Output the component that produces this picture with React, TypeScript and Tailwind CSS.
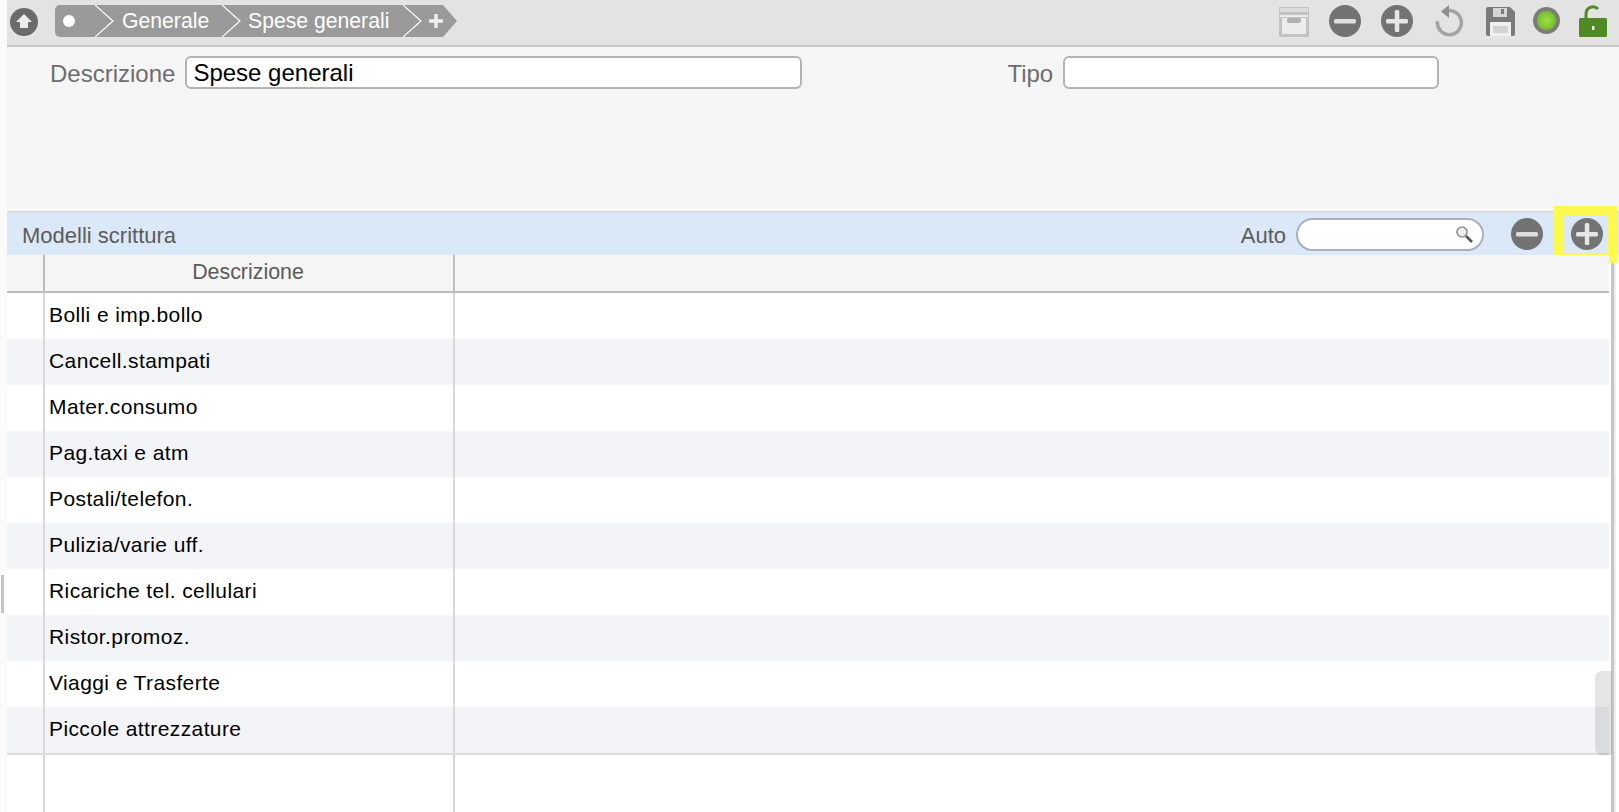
const rows = [
  "Bolli e imp.bollo",
  "Cancell.stampati",
  "Mater.consumo",
  "Pag.taxi e atm",
  "Postali/telefon.",
  "Pulizia/varie uff.",
  "Ricariche tel. cellulari",
  "Ristor.promoz.",
  "Viaggi e Trasferte",
  "Piccole attrezzature",
];

const RoundMinus = () => (
  <svg width="32" height="32" viewBox="0 0 32 32" className="block">
    <circle cx="16" cy="16" r="16" fill="#737373" />
    <rect x="5" y="14" width="22" height="4.5" rx="1.5" fill="#dedede" />
  </svg>
);

const RoundPlus = () => (
  <svg width="32" height="32" viewBox="0 0 32 32" className="block">
    <circle cx="16" cy="16" r="16" fill="#737373" />
    <rect x="5" y="14" width="22" height="4.5" rx="1.5" fill="#e6e6e6" />
    <rect x="13.8" y="5" width="4.5" height="22" rx="1.5" fill="#e6e6e6" />
  </svg>
);

const Chevron = () => (
  <svg width="20" height="32" viewBox="0 0 20 32" className="block shrink-0 bg-[#9a9a9a]">
    <path d="M0 0 L18 16 L0 32" fill="none" stroke="#ffffff" strokeWidth="1.2" />
  </svg>
);

const Field = ({ label, value, labelClass, inputClass }: { label: string; value?: string; labelClass: string; inputClass: string }) => (
  <div className="flex items-center">
    <span className={`mt-1 text-[24px] text-[#6d6d6d] ${labelClass}`}>{label}</span>
    <div className={`h-[33px] rounded-[6px] border-2 border-[#b4b4b4] bg-white pl-[6px] text-[24px] leading-[29px] text-black ${inputClass}`}>
      {value}
    </div>
  </div>
);

export default function App() {
  return (
    <div className="flex h-[812px] w-[1619px] overflow-hidden bg-white font-['Liberation_Sans',sans-serif]">
      {/* left gutter */}
      <div className="flex w-[7px] shrink-0 flex-col bg-[#fbfbfb] pt-[575px]">
        <div className="ml-px h-[38px] w-[3px] bg-[#c4c4c4]" />
      </div>

      <div className="flex min-w-0 flex-1 flex-col">
        {/* toolbar */}
        <div className="flex h-[47px] shrink-0 items-start border-b-2 border-[#c9c9c9] bg-[#e3e3e3]">
          <svg width="28" height="28" viewBox="0 0 28 28" className="ml-[3px] mt-2 shrink-0">
            <circle cx="14" cy="14" r="14" fill="#6b6b6b" />
            <path d="M14 6 L22 14 L18 14 L18 20 L10 20 L10 14 L6 14 Z" fill="#ececec" />
          </svg>

          <div className="ml-[17px] mt-[5px] flex h-8 items-stretch text-[21.2px] text-white">
            <div className="flex w-10 items-center rounded-l-[5px] bg-[#9a9a9a] pl-2">
              <div className="h-3 w-3 rounded-full bg-white" />
            </div>
            <Chevron />
            <div className="flex w-[107px] items-center bg-[#9a9a9a] pl-[7px]">Generale</div>
            <Chevron />
            <div className="flex w-[161px] items-center bg-[#9a9a9a] pl-[6px]">Spese generali</div>
            <Chevron />
            <svg width="35" height="32" viewBox="0 0 35 32" className="block shrink-0">
              <path d="M0 0 H20 L34 16 L20 32 H0 Z" fill="#9a9a9a" />
              <path d="M6 16 H20 M13 9 V23" stroke="#f0f0f0" strokeWidth="3.4" />
            </svg>
          </div>

          <div className="ml-auto flex items-start pr-[12px]">
            <svg width="30" height="30" viewBox="0 0 30 30" className="mt-[7px]">
              <rect x="0" y="0" width="30" height="30" fill="#c2c2c2" />
              <rect x="1" y="1" width="28" height="4" fill="#dcdcdc" />
              <rect x="1" y="8" width="28" height="2" fill="#ececec" />
              <rect x="3" y="11" width="24" height="16" fill="#ececec" />
              <rect x="8" y="11" width="14" height="5" rx="2" fill="#b0b0b0" />
            </svg>
            <div className="ml-5 mt-[5px]"><RoundMinus /></div>
            <div className="ml-5 mt-[5px]"><RoundPlus /></div>
            <svg width="30" height="32" viewBox="0 0 30 32" className="ml-[21px] mt-[5px]">
              <path d="M11 6.5 A12 12 0 1 1 3.5 16" fill="none" stroke="#a3a3a3" strokeWidth="3.5" />
              <path d="M15 0 L7 6.5 L15 13 Z" fill="#8f8f8f" />
            </svg>
            <svg width="29" height="29" viewBox="0 0 29 29" className="ml-[22px] mt-[7px]">
              <path d="M2 0 H24 L29 5 V27 a2 2 0 0 1 -2 2 H2 a2 2 0 0 1 -2 -2 V2 a2 2 0 0 1 2 -2 Z" fill="#7a7a7a" />
              <rect x="7" y="1" width="14" height="9" fill="#d6d6d6" />
              <rect x="15" y="2" width="3" height="5" fill="#7a7a7a" />
              <rect x="4" y="15" width="21" height="14" fill="#f0f0f0" />
              <rect x="7" y="19" width="15" height="7" fill="#d2d2d2" />
            </svg>
            <div className="ml-[18px] mt-[7px] flex h-[27px] w-[27px] items-center justify-center rounded-full bg-[#7c7e76]">
              <div className="h-[19px] w-[19px] rounded-full bg-radial from-[#9be040] to-[#6aae2b]" />
            </div>
            <svg width="28" height="32" viewBox="0 0 28 32" className="ml-[19px] mt-[5px]">
              <path d="M7 14 V9 a7 7 0 0 1 12 -5" fill="none" stroke="#4f8a24" strokeWidth="3" />
              <rect x="0" y="13" width="28" height="19" rx="1.5" fill="#4f8a24" />
              <rect x="13" y="21" width="2.5" height="4" fill="#e6e6e6" />
            </svg>
          </div>
        </div>

        {/* form */}
        <div className="flex h-[166px] shrink-0 items-start border-b-2 border-[#dddddd] bg-[#f5f5f5] pt-[5px]">
          <Field label="Descrizione" value="Spese generali" labelClass="ml-[43px] mr-[10px]" inputClass="w-[617px]" />
          <Field label="Tipo" labelClass="ml-[205px] mr-[10px]" inputClass="w-[376px]" />
        </div>

        {/* section bar */}
        <div className="flex h-[42px] shrink-0 items-center bg-[#dbe8f8] pl-[15px] pr-[16px] text-[#5c5c5c]">
          <span className="mt-[2px] text-[22px]">Modelli scrittura</span>
          <span className="ml-auto mt-[3px] text-[22px]">Auto</span>
          <div className="ml-[10px] flex h-[33px] w-[188px] items-center justify-end rounded-full border-2 border-[#a9b1bd] bg-white pr-2">
            <svg width="19" height="19" viewBox="0 0 19 19">
              <circle cx="7" cy="7" r="5" fill="#eef1f3" stroke="#8d8d8d" strokeWidth="1.6" />
              <path d="M11 11 L17 17" stroke="#555555" strokeWidth="2.6" />
            </svg>
          </div>
          <div className="ml-[27px]"><RoundMinus /></div>
          <div className="relative ml-[28px]">
            <RoundPlus />
            <span className="absolute -bottom-[13px] -left-[17px] -right-[14px] -top-3 border-[10px] border-[#fdf94f]" />
          </div>
        </div>

        {/* table */}
        <div className="flex min-h-0 flex-1">
          <div className="relative flex w-[1602px] shrink-0 flex-col">
            <div className="flex h-[38px] shrink-0 border-b-2 border-[#bdbdbd] bg-[#f5f5f5] text-[21.4px] leading-[34px] text-[#5c5c5c]">
              <div className="w-[38px] border-r-2 border-[#bdbdbd]" />
              <div className="w-[410px] border-r-2 border-[#bdbdbd] pr-[2px] text-center">Descrizione</div>
            </div>
            <div className="flex flex-col border-b-2 border-[#dcdcdc]">
              {rows.map((name, i) => (
                <div key={name} className={`flex h-[46px] ${i % 2 === 1 ? "bg-[#f3f4f8]" : "bg-white"}`}>
                  <div className="w-[38px] border-r-2 border-[#d8d8d8]" />
                  <div className="w-[410px] border-r-2 border-[#d8d8d8] pl-1 text-[21px] leading-[44px] tracking-[0.4px] text-black">
                    {name}
                  </div>
                </div>
              ))}
            </div>
            <div className="flex flex-1">
              <div className="w-[38px] border-r-2 border-[#d8d8d8]" />
              <div className="w-[410px] border-r-2 border-[#d8d8d8]" />
            </div>
            <div className="absolute -right-[3px] top-[416px] h-[84px] w-[17px] rounded-l-[7px] bg-black/10" />
          </div>
          <div className="ml-[2px] w-[3px] bg-[#c6c6c6]" />
          <div className="w-[2px] bg-[#eeeeee]" />
        </div>
      </div>
    </div>
  );
}
